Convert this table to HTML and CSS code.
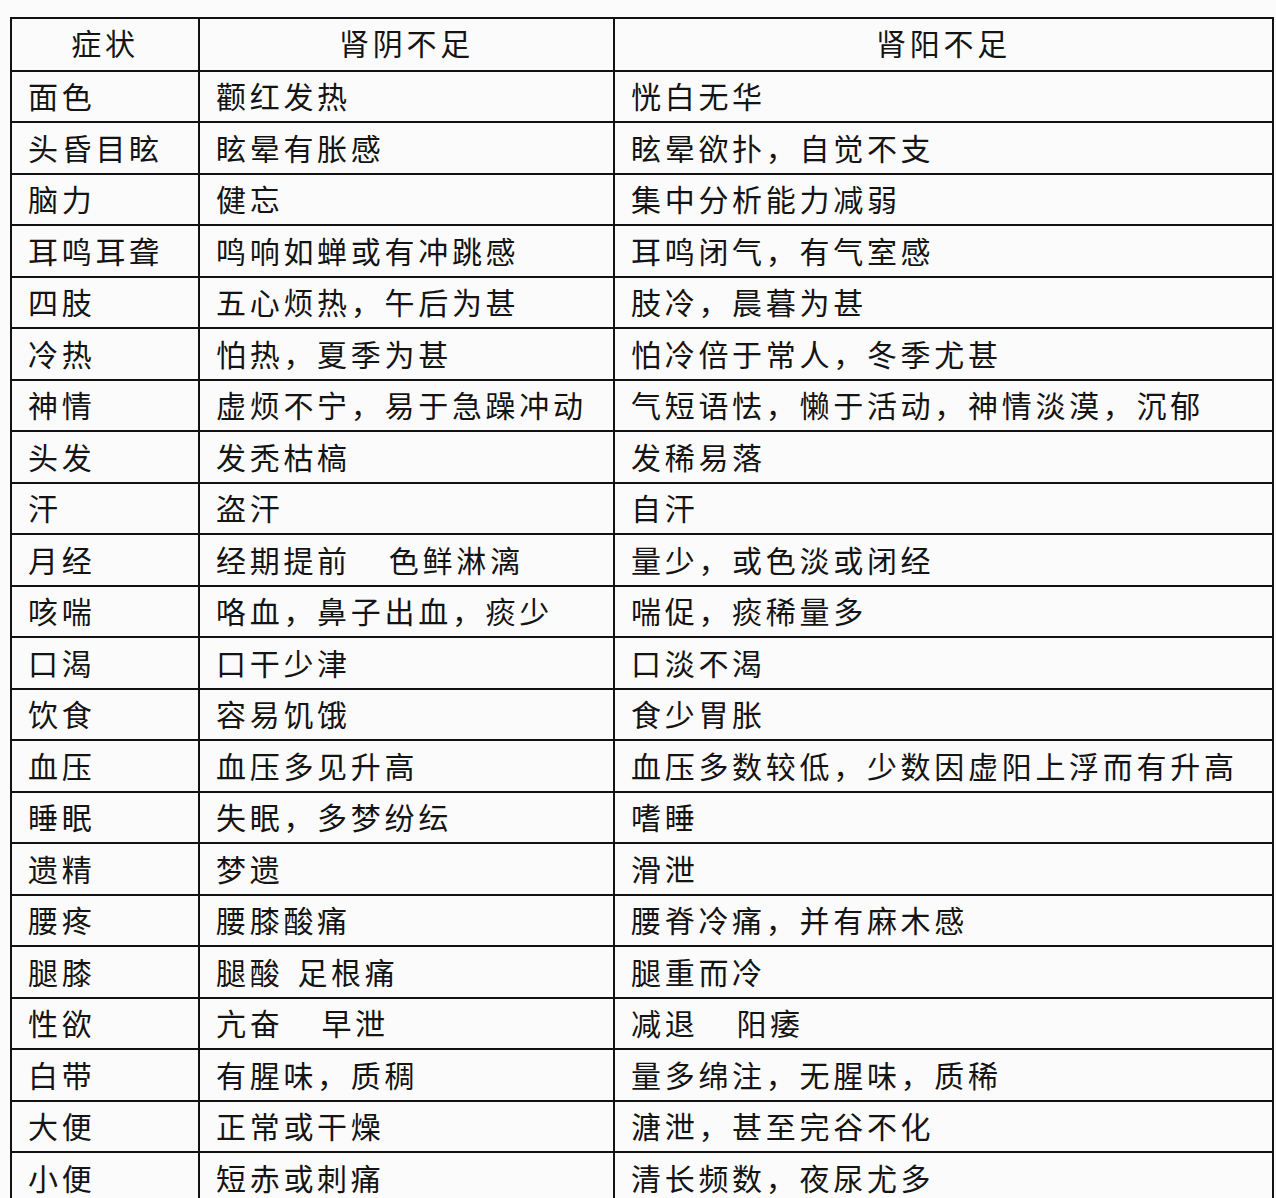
FILE: index.html
```html
<!DOCTYPE html>
<html lang="zh-CN">
<head>
<meta charset="utf-8">
<title>肾阴不足与肾阳不足</title>
<link rel="stylesheet" href="styles.css">
</head>
<body>
<table class="sym-table">
  <colgroup>
    <col class="c1"><col class="c2"><col class="c3">
  </colgroup>
  <thead>
    <tr><th>症状</th><th>肾阴不足</th><th>肾阳不足</th></tr>
  </thead>
  <tbody>
    <tr><td>面色</td><td>颧红发热</td><td>恍白无华</td></tr>
    <tr><td>头昏目眩</td><td>眩晕有胀感</td><td>眩晕欲扑，自觉不支</td></tr>
    <tr><td>脑力</td><td>健忘</td><td>集中分析能力减弱</td></tr>
    <tr><td>耳鸣耳聋</td><td>鸣响如蝉或有冲跳感</td><td>耳鸣闭气，有气室感</td></tr>
    <tr><td>四肢</td><td>五心烦热，午后为甚</td><td>肢冷，晨暮为甚</td></tr>
    <tr><td>冷热</td><td>怕热，夏季为甚</td><td>怕冷倍于常人，冬季尤甚</td></tr>
    <tr><td>神情</td><td>虚烦不宁，易于急躁冲动</td><td>气短语怯，懒于活动，神情淡漠，沉郁</td></tr>
    <tr><td>头发</td><td>发秃枯槁</td><td>发稀易落</td></tr>
    <tr><td>汗</td><td>盗汗</td><td>自汗</td></tr>
    <tr><td>月经</td><td>经期提前<span class="gap2"></span>色鲜淋漓</td><td>量少，或色淡或闭经</td></tr>
    <tr><td>咳喘</td><td>咯血，鼻子出血，痰少</td><td>喘促，痰稀量多</td></tr>
    <tr><td>口渴</td><td>口干少津</td><td>口淡不渴</td></tr>
    <tr><td>饮食</td><td>容易饥饿</td><td>食少胃胀</td></tr>
    <tr><td>血压</td><td>血压多见升高</td><td>血压多数较低，少数因虚阳上浮而有升高</td></tr>
    <tr><td>睡眠</td><td>失眠，多梦纷纭</td><td>嗜睡</td></tr>
    <tr><td>遗精</td><td>梦遗</td><td>滑泄</td></tr>
    <tr><td>腰疼</td><td>腰膝酸痛</td><td>腰脊冷痛，并有麻木感</td></tr>
    <tr><td>腿膝</td><td>腿酸<span class="gap1"></span>足根痛</td><td>腿重而冷</td></tr>
    <tr><td>性欲</td><td>亢奋<span class="gap2"></span>早泄</td><td>减退<span class="gap2"></span>阳痿</td></tr>
    <tr><td>白带</td><td>有腥味，质稠</td><td>量多绵注，无腥味，质稀</td></tr>
    <tr><td>大便</td><td>正常或干燥</td><td>溏泄，甚至完谷不化</td></tr>
    <tr><td>小便</td><td>短赤或刺痛</td><td>清长频数，夜尿尤多</td></tr>
  </tbody>
</table>
</body>
</html>
```

FILE: styles.css
```css
html, body {
  margin: 0;
  background: #fcfbfc;
}
body {
  padding: 17px 4px 0 10px;
  font-family: "Noto Sans CJK SC", "Noto Sans", sans-serif;
  color: #141414;
}
.sym-table {
  width: 1262px;
  border-collapse: collapse;
  table-layout: fixed;
}
.c1 { width: 188px; }
.c2 { width: 415px; }
.c3 { width: 659px; }
.sym-table th,
.sym-table td {
  border: 2px solid #121212;
  height: 47.5px;
  padding: 0 0 2px 16px;
  font-size: 30px;
  font-weight: 400;
  letter-spacing: 3.7px;
  line-height: 1;
  white-space: nowrap;
  vertical-align: middle;
  text-align: left;
}
.sym-table th {
  height: 46.6px;
  text-align: center;
  padding: 0 0 4px 0;
}
.gap2 { display: inline-block; width: 38px; }
.gap1 { display: inline-block; width: 14px; }
```
